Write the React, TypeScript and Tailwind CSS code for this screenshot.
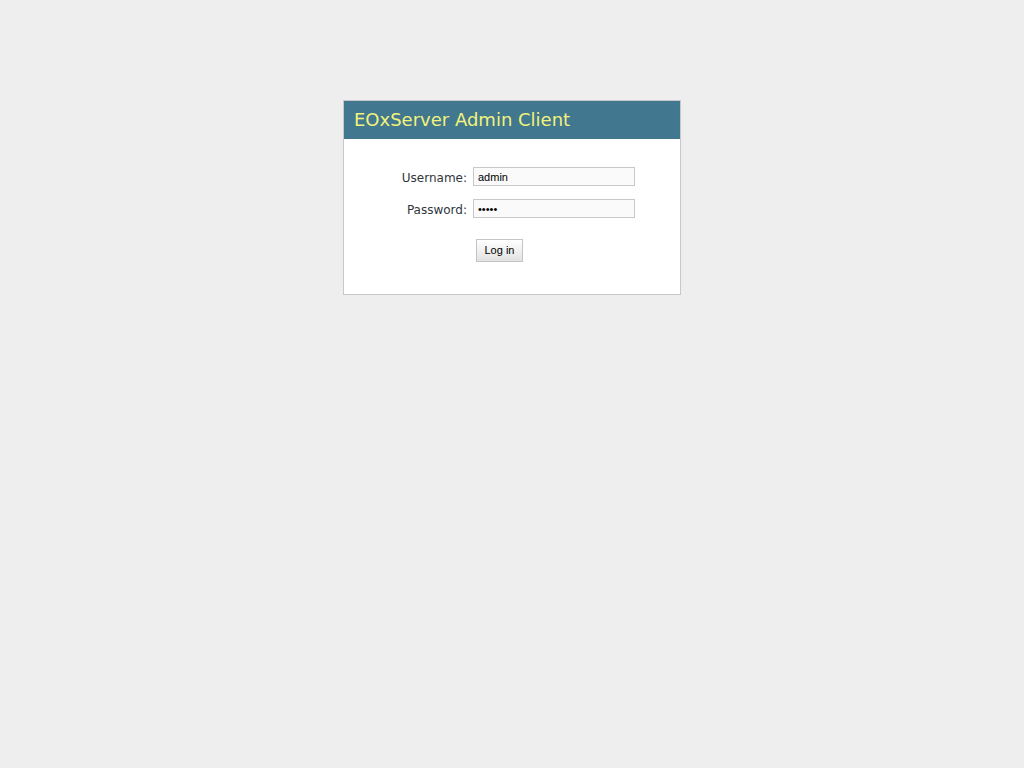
export default function App() {
  return (
    <div className="min-h-screen bg-[#eeeeee] pt-[100px] font-['DejaVu_Sans',sans-serif]">
      <div className="mx-auto w-[338px] border border-[#c8c8c8] bg-white">
        <div className="flex h-[38px] items-center bg-[#41778f] px-[10px] pb-[2px] text-[18px] text-[#f2f27c]">
          EOxServer Admin Client
        </div>
        <form className="flex flex-col pt-[28px] pb-[32px]" onSubmit={(e) => e.preventDefault()}>
          <div className="flex items-center">
            <label className="h-[19px] w-[123px] text-right text-[12px] leading-[22px] text-[#30363c]">Username:</label>
            <input
              type="text"
              defaultValue="admin"
              className="ml-[6px] h-[19px] w-[162px] border border-[#c8c8c8] bg-[#fafafa] px-[4px] font-['Liberation_Sans',sans-serif] text-[11px] text-black outline-none"
            />
          </div>
          <div className="mt-[13px] flex items-center">
            <label className="h-[19px] w-[123px] text-right text-[12px] leading-[22px] text-[#30363c]">Password:</label>
            <input
              type="password"
              defaultValue="admin"
              className="ml-[6px] h-[19px] w-[162px] border border-[#c8c8c8] bg-[#fafafa] px-[4px] font-['Liberation_Sans',sans-serif] text-[11px] text-black outline-none"
            />
          </div>
          <div className="mt-[21px] flex pl-[132px]">
            <button
              type="submit"
              className="h-[23px] w-[47px] border border-[#c4c4c4] bg-gradient-to-b from-white to-[#e2e2e2] font-['Liberation_Sans',sans-serif] text-[11px] text-black"
            >
              Log in
            </button>
          </div>
        </form>
      </div>
    </div>
  );
}
